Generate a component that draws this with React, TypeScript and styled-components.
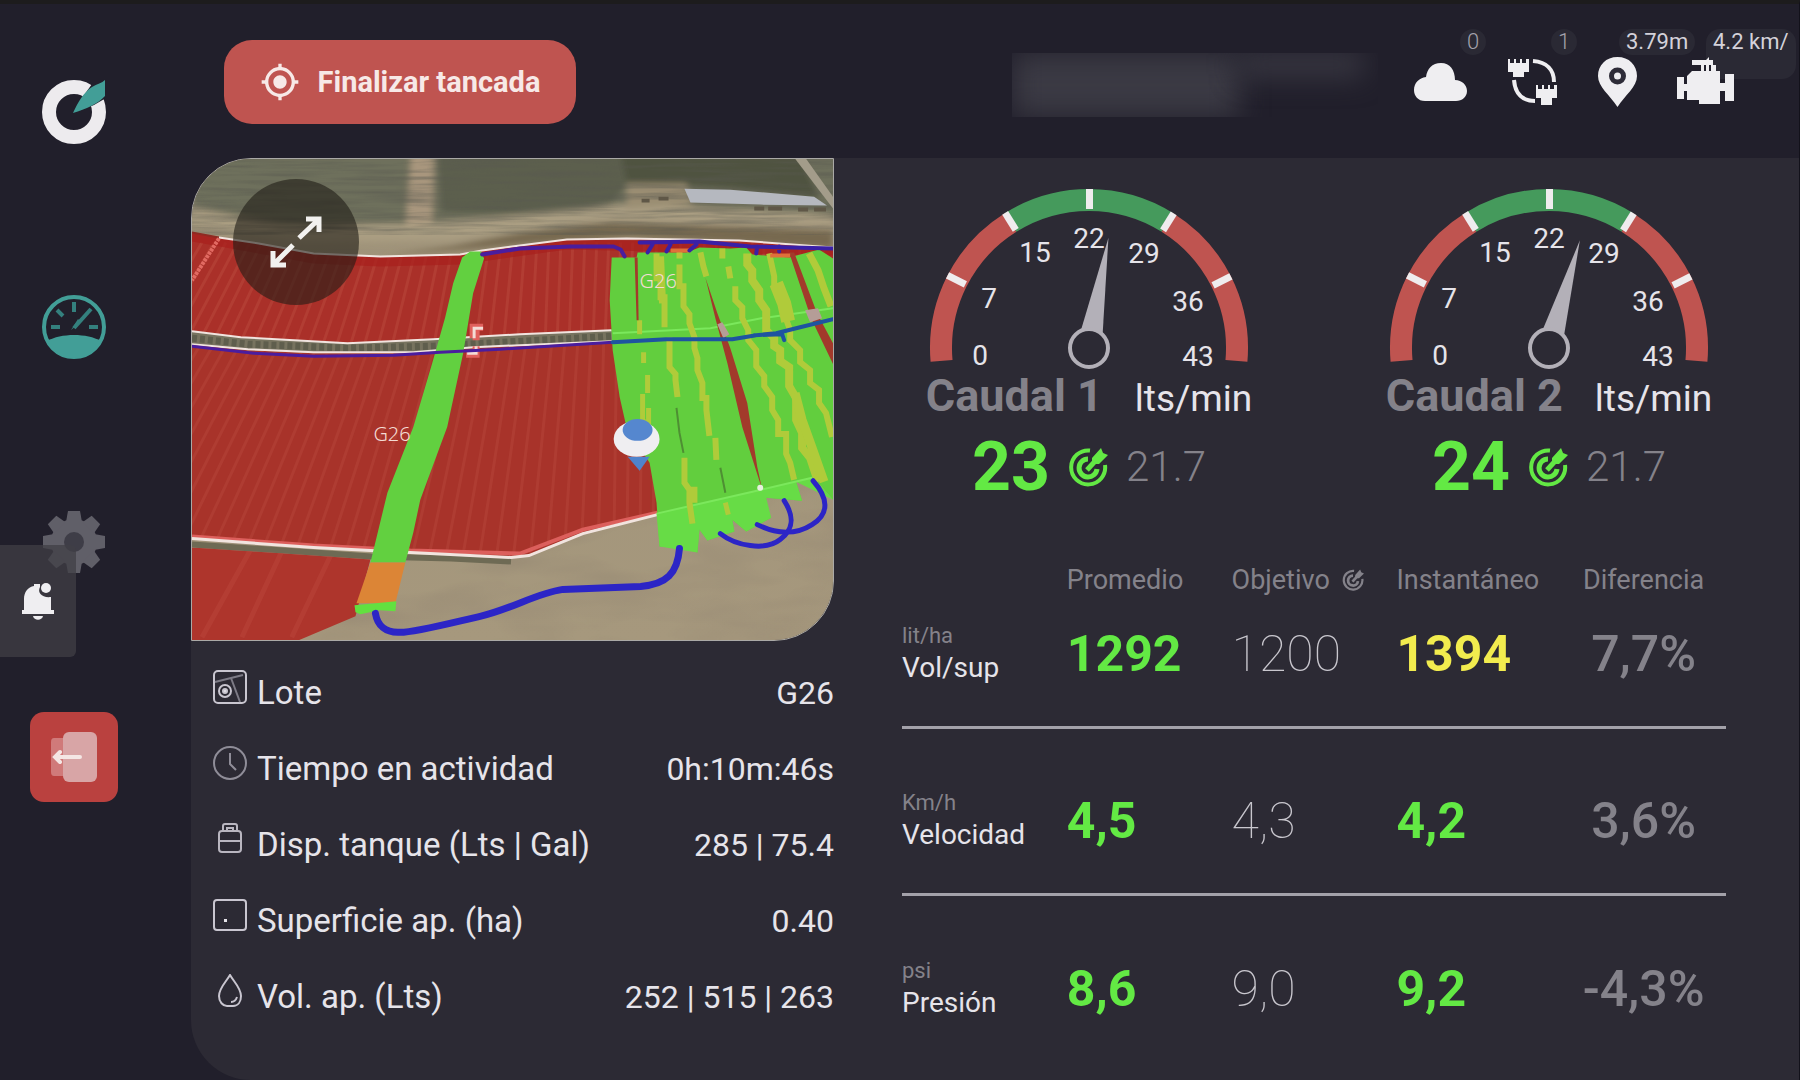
import React from "react";
import styled, { createGlobalStyle } from "styled-components";
import { MdMyLocation } from "react-icons/md";

const colors = {
    background: "#211f2b",
    panel: "#2c2a34",
    text: "#e6e4ea",
    muted: "#84828a",
    green: "#63e944",
    yellow: "#f2ec4e",
    red: "#bf5450",
    teal: "#429e97",
};

interface GaugeData {
    name: string;
    value: string;
    target: string;
    needle: number;
}

interface Metric {
    unit: string;
    name: string;
    average: string;
    target: string;
    instant: string;
    instantColor: string;
    difference: string;
}

interface Detail {
    icon: React.ReactNode;
    label: string;
    value: string;
}

const gauges: GaugeData[] = [
    { name: "Caudal 1", value: "23", target: "21.7", needle: 10 },
    { name: "Caudal 2", value: "24", target: "21.7", needle: 16 },
];

const metrics: Metric[] = [
    {
        unit: "lit/ha",
        name: "Vol/sup",
        average: "1292",
        target: "1200",
        instant: "1394",
        instantColor: colors.yellow,
        difference: "7,7%",
    },
    {
        unit: "Km/h",
        name: "Velocidad",
        average: "4,5",
        target: "4,3",
        instant: "4,2",
        instantColor: colors.green,
        difference: "3,6%",
    },
    {
        unit: "psi",
        name: "Presión",
        average: "8,6",
        target: "9,0",
        instant: "9,2",
        instantColor: colors.green,
        difference: "-4,3%",
    },
];

const dialLabels = [
    { text: "0", x: 51, y: 177 },
    { text: "7", x: 60, y: 120 },
    { text: "15", x: 106, y: 74 },
    { text: "22", x: 160, y: 60 },
    { text: "29", x: 215, y: 75 },
    { text: "36", x: 259, y: 123 },
    { text: "43", x: 269, y: 178 },
];

const polar = (radius: number, degrees: number) => {
    const rad = (degrees * Math.PI) / 180;
    return `${160 + radius * Math.sin(rad)} ${160 - radius * Math.cos(rad)}`;
};

const arc = (from: number, to: number) =>
    `M${polar(148, from)} A148 148 0 0 1 ${polar(148, to)}`;

const Dial: React.FC<{ needle: number }> = ({ needle }) => (
    <svg width="320" height="190" viewBox="0 0 320 190">
        <g fill="none" strokeWidth="22">
            <path d={arc(-95, -32)} stroke={colors.red} />
            <path d={arc(-32, 32)} stroke="#459a5c" />
            <path d={arc(32, 95)} stroke={colors.red} />
        </g>
        {[-63, -32, 0, 32, 63].map(angle => (
            <rect
                key={angle}
                x="157"
                y="1"
                width="7"
                height="20"
                fill="#efecee"
                transform={`rotate(${angle} 160 160)`}
            />
        ))}
        {dialLabels.map(label => (
            <DialText key={label.text} x={label.x} y={label.y}>
                {label.text}
            </DialText>
        ))}
        <g transform={`rotate(${needle} 160 160)`} fill="#b3b0b8">
            <path d="M160 48 L171 144 L149 144 Z" />
        </g>
        <circle cx="160" cy="160" r="19" fill={colors.panel} stroke="#b3b0b8" strokeWidth="4" />
    </svg>
);

const TargetIcon: React.FC<{ size: number }> = ({ size }) => (
    <svg width={size} height={size} viewBox="0 0 40 40" fill="none" stroke="currentColor">
        <path d="M22 3.5 A17 17 0 1 0 37 18" strokeWidth="4" />
        <path d="M20 12 A9 9 0 1 0 29 22" strokeWidth="5" />
        <path d="M19 23 L30 11" strokeWidth="5" />
        <path d="M24 11 L33 1 L35 6 L40 8 L31 17 L24 17 Z" fill="currentColor" stroke="none" />
    </svg>
);

const Logo = () => (
    <svg width="64" height="64" viewBox="0 0 64 64">
        <circle cx="32" cy="32" r="25" fill="none" stroke="#edebee" strokeWidth="14" />
        <path d="M30 34 L40 18 L50 4 L56 0 L64 0 L64 18 L52 25 Z" fill={colors.background} />
        <path d="M31 33 C36 22 42 12 50 7 C55 4 60 3 63 0 L63 16 C56 24 44 29 31 33 Z" fill={colors.teal} />
    </svg>
);

const SpeedIcon = () => (
    <svg width="66" height="66" viewBox="0 0 66 66" fill="none">
        <circle cx="33" cy="33" r="30" stroke={colors.teal} strokeWidth="4" />
        <path d="M6 47 C20 39 46 39 60 47 A30 30 0 0 1 6 47 Z" fill={colors.teal} />
        <g stroke="#34807e" strokeWidth="4">
            <path d="M10 33 H19 M48 33 H57 M33 8 V18 M16 16 L22 22" />
            <path d="M33 34 L50 15" />
        </g>
        <path d="M30 36 L37 25 L40 28 Z" fill="#34807e" />
    </svg>
);

const GearIcon = () => (
    <svg width="62" height="62" viewBox="-31 -31 62 62" fill="#605f68">
        <circle r="23" />
        {[0, 45, 90, 135, 180, 225, 270, 315].map(angle => (
            <path key={angle} d="M-8 -20 L-6 -31 H6 L8 -20 Z" transform={`rotate(${angle})`} />
        ))}
        <circle r="10" fill="#3e3d47" />
    </svg>
);

const BellIcon = () => (
    <svg width="34" height="38" viewBox="0 0 34 38" fill="#efeef1">
        <path d="M3 28 V17 C3 10 7 5 13 4 V2 H19 V5 C16 11 21 16 30 15 V28 H33 V32 H1 V28 Z" />
        <circle cx="25" cy="6" r="5" />
        <path d="M12 34 H22 C21 39 13 39 12 34 Z" />
    </svg>
);

const ExitIcon = () => (
    <svg width="48" height="52" viewBox="0 0 48 52" fill="none">
        <path d="M14 7 H4 Q1 7 1 11 V41 Q1 45 4 45 H14 Z" fill="#d07a7a" />
        <rect x="13" y="1" width="34" height="50" rx="6" fill="#d8a5a6" />
        <path d="M30 26 H6 M10 21 L5 26 L10 31" stroke="#f4e6e4" strokeWidth="4" strokeLinecap="round" />
    </svg>
);

const CloudIcon = () => (
    <svg width="53" height="38" viewBox="0 0 53 38" fill="#efeef1">
        <path d="M11 38 C4 38 0 33 0 27 C0 20 5 15 12 14 C13 6 18 0 27 0 C36 0 41 7 41 17 C48 17 53 22 53 28 C53 34 48 38 42 38 Z" />
    </svg>
);

const LinkIcon = () => (
    <svg width="51" height="48" viewBox="0 0 51 48" fill="#efeef1">
        <path d="M1 1 H3 V5 H7 V1 H9 V5 H13 V1 H15 V5 H19 V1 H22 V14 H17 V19 H6 V14 H1 Z" />
        <path d="M29 27 H31 V31 H35 V27 H37 V31 H41 V27 H43 V31 H47 V27 H50 V40 H45 V47 H34 V40 H29 Z" />
        <path d="M26 3 C40 4 47 12 47 24 M7 22 C8 36 16 43 28 43" fill="none" stroke="#efeef1" strokeWidth="4" />
    </svg>
);

const PinIcon = () => (
    <svg width="39" height="50" viewBox="0 0 39 50">
        <path d="M19.500 0 C8 0 0 8 0 19 C0 30 12 38 19.500 50 C27 38 39 30 39 19 C39 8 31 0 19.500 0 Z" fill="#efeef1" />
        <circle cx="19.500" cy="19" r="6" fill="#efeef1" stroke="#2e2c38" strokeWidth="5" />
    </svg>
);

const EngineIcon = () => (
    <svg width="57" height="46" viewBox="0 0 57 46" fill="#efeef1">
        <path d="M15 1 H29 L32 -2 V1 H36 V6 H39 V12 H43 V24 H48 V15 H57 V42 H48 V32 H43 V45 H22 V41 H10 V32 H7 V40 H0 V18 H7 V25 H10 V17 L15 12 H24 V6 H15 Z" />
        <path d="M28 6 V12 M33 6 V12" stroke="#211f2b" strokeWidth="2" />
    </svg>
);

const ExpandIcon = () => (
    <svg width="52" height="52" viewBox="0 0 52 52" fill="none" stroke="#f2f1ef" strokeWidth="5">
        <path d="M29 22 L48 4 M36 3 H49 V16" />
        <path d="M23 29 L4 48 M3 35 V49 H16" />
    </svg>
);

const LotIcon = () => (
    <svg width="34" height="34" viewBox="0 0 34 34" fill="none" stroke="#c9c6d0" strokeWidth="2">
        <rect x="1" y="1" width="32" height="32" rx="4" />
        <path d="M2 12 L30 5 M18 8 L27 32" stroke="#7d7b86" />
        <circle cx="12" cy="21" r="6" />
        <circle cx="12" cy="21" r="2" fill="#e6e4ea" />
    </svg>
);

const ClockIcon = () => (
    <svg width="34" height="34" viewBox="0 0 34 34" fill="none" stroke="#8f8d98" strokeWidth="2">
        <circle cx="17" cy="17" r="16" />
        <path d="M17 7 V18 L23 24" />
    </svg>
);

const TankIcon = () => (
    <svg width="34" height="34" viewBox="0 0 34 34" fill="none" stroke="#b9b6c0" strokeWidth="2">
        <path d="M10 9 V4 Q10 2 12 2 H22 Q24 2 24 4 V9 M14 9 V6 H20 V9" />
        <rect x="6" y="9" width="22" height="21" rx="3" />
        <path d="M6 19 H28" />
    </svg>
);

const AreaIcon = () => (
    <svg width="34" height="34" viewBox="0 0 34 34" fill="none" stroke="#c9c6d0" strokeWidth="2">
        <rect x="1" y="2" width="32" height="30" rx="3" />
        <rect x="11" y="21" width="3" height="3" fill="#e6e4ea" stroke="none" />
    </svg>
);

const DropIcon = () => (
    <svg width="34" height="34" viewBox="0 0 34 34" fill="none" stroke="#c9c6d0" strokeWidth="2">
        <path d="M17 1 C13 8 6 14 6 22 C6 28 10 32 14 32 H20 C25 32 28 28 28 22 C28 14 21 8 17 1 Z" />
        <path d="M18 28 C21 28 23 26 24 23" />
    </svg>
);

const details: Detail[] = [
    { icon: <LotIcon />, label: "Lote", value: "G26" },
    { icon: <ClockIcon />, label: "Tiempo en actividad", value: "0h:10m:46s" },
    { icon: <TankIcon />, label: "Disp. tanque (Lts | Gal)", value: "285 | 75.4" },
    { icon: <AreaIcon />, label: "Superficie ap. (ha)", value: "0.40" },
    { icon: <DropIcon />, label: "Vol. ap. (Lts)", value: "252 | 515 | 263" },
];

const yellowTracks = [
    { d: "M466 95 V120 H470 V139 H474 V169 M479 179 V209 L485 216 V222 L487 239", width: 6 },
    { d: "M470 98 L472 145", width: 7 },
    { d: "M489 92 V100 M489 106 V128 H493 V148 L499 156 V165 L504 179 V190 L507 200 V212 L512 225 V240 H516 V252 L519 278 M525 280 L526 302", width: 6 },
    { d: "M510 94 L513 108 L516 118 M532 90 V100 M538 108 L540 120 M545 128 V142 L552 149 V160 L558 172 V182 L566 192 V208 L574 218 V228 L582 239 V252 L588 262 V276 H596 V296 L600 305 L604 322", width: 6 },
    { d: "M557 95 V106 L562 112 V122 L569 132 V142 L576 152 V172 L584 180 V188 L590 192 V203 L599 209 V228 L606 240 V262 L612 275 V290 L620 300 L628 324", width: 8 },
    { d: "M605 235 L612 262 L622 290 L634 324", width: 9 },
    { d: "M579 95 L584 118 V128 L592 139 V150 L600 172 V182 L610 192 V204 L620 212 V225 L629 232 V245 L636 255 L642 279", width: 6 },
    { d: "M586 125 L594 145 L598 163", width: 14 },
    { d: "M619 95 L628 112 L634 130 L641 148", width: 7 },
    { d: "M449 162 V176 M453 194 V205 M457 217 V235 M452 236 V262 L460 270 M458 250 V268", width: 5 },
    { d: "M494 300 V325 L499 332 V345 L502 366 M499 332 H504 V345", width: 6 },
    { d: "M535 345 L538 357", width: 5 },
];

const FieldMap = () => (
    <MapDrawing viewBox="0 0 643 483" preserveAspectRatio="xMidYMid slice" role="img" aria-label="Mapa del lote">
        <defs>
            <filter id="streaks" x="0" y="0" width="100%" height="100%">
                <feTurbulence type="fractalNoise" baseFrequency="0.012 0.22" numOctaves="3" seed="4" />
                <feColorMatrix values="0 0 0 0 0.1  0 0 0 0 0.1  0 0 0 0 0.08  1.6 0 0 0 -0.6" />
            </filter>
            <filter id="soil" x="0" y="0" width="100%" height="100%">
                <feTurbulence type="fractalNoise" baseFrequency="0.008 0.03" numOctaves="3" seed="9" />
                <feColorMatrix values="0 0 0 0 0.25  0 0 0 0 0.2  0 0 0 0 0.15  1.2 0 0 0 -0.5" />
            </filter>
            <filter id="soften">
                <feGaussianBlur stdDeviation="3" />
            </filter>
            <linearGradient id="land" x1="0" y1="0" x2="0" y2="1">
                <stop offset="0" stopColor="#9e9279" />
                <stop offset="1" stopColor="#a6987d" />
            </linearGradient>
            <clipPath id="upperField">
                <path d="M0 74 L27 79 L67 85 L122 95 L189 98 L269 96 L291 92 L329 88 L376 81 L436 80 L549 82 L643 89 V150 L421 172 L329 176 L242 181 L156 185 L49 179 L0 173 Z" />
            </clipPath>
            <clipPath id="lowerField">
                <path d="M0 186 L56 192 L122 195 L222 195 L282 190 L422 183 L643 160 V310 L467 357 L392 375 L336 398 L309 399 L219 395 L122 390 L0 380 Z" />
            </clipPath>
            <clipPath id="cornerField">
                <path d="M0 390 L122 398 L179 402 L164 459 L107 483 H0 Z" />
            </clipPath>
        </defs>

        {/* surroundings */}
        <rect width="643" height="483" fill="url(#land)" />
        <g filter="url(#soften)">
            <path d="M0 -6 H650 V60 L500 48 L420 46 L330 60 L240 66 L90 66 L0 48 Z" fill="#6e6f5c" />
            <path d="M330 -6 H560 L480 28 L436 26 L420 46 L340 58 L250 54 L246 -6 Z" fill="#5c5f4d" />
            <path d="M430 -6 H610 L630 40 L540 30 L436 24 Z" fill="#4f5341" />
            <path d="M220 -6 H243 L241 66 L214 70 Z" fill="#a8967d" />
            <path d="M0 52 L80 66 L220 66 L330 56 L440 46 L643 56 V66 L400 62 L260 82 L110 84 L0 66 Z" fill="#aa9e82" />
            <path d="M260 88 L330 74 L420 64 L643 72 V90 L440 78 L330 86 L190 98 Z" fill="#77694f" />
            <path d="M436 25 H496 L502 46 L436 50 Z" fill="#9a8d72" />
        </g>
        <rect width="643" height="76" filter="url(#streaks)" opacity="0.7" />
        <path d="M605 0 H616 L643 38 V50 Z" fill="#a39c8a" />
        <path d="M494 30 L540 31 L624 38 L637 47 L570 46 L500 44 Z" fill="#b5b8bf" />
        <path d="M451 42 h8 M468 40 h10 M564 50 h10 M578 50 h14 M608 51 h10 M624 51 h12" stroke="#5f5747" strokeWidth="4" />
        <rect y="310" width="643" height="173" filter="url(#soil)" opacity="0.6" />

        {/* lane between the lots */}
        <path d="M0 173 L49 179 L156 185 L242 181 L329 176 L421 172 V184 L329 188 L222 194 L122 194 L56 191 L0 186 Z" fill="#77735f" />
        <path d="M0 180 L56 186 L156 190 L242 188 L421 178" fill="none" stroke="#5f5e4d" strokeWidth="7" strokeDasharray="5 3" />
        <path d="M0 387 L122 395 L180 399 L260 401 L320 404" fill="none" stroke="#6e6a54" strokeWidth="6" />

        {/* lots */}
        <g clipPath="url(#upperField)">
            <rect width="643" height="200" fill="#aa3029" />
            {Array.from({ length: 64 }, (_, i) => (
                <path
                    key={i}
                    d={`M${i * 12 + 10} 84 L${i * 12 + 10 - Math.max(4, 62 - i * 2)} 190`}
                    stroke="#b8463b"
                    strokeWidth="3"
                    opacity="0.6"
                />
            ))}
            <path d="M0 78 L67 90 L122 100 L189 103 L269 101 L376 86 L643 92" fill="none" stroke="#a81f1d" strokeWidth="10" opacity="0.7" />
        </g>
        <g clipPath="url(#lowerField)">
            <rect y="150" width="643" height="260" fill="#a8332a" />
            {Array.from({ length: 70 }, (_, i) => (
                <path
                    key={i}
                    d={`M${i * 13 + 10} 184 L${i * 13 + 10 - Math.max(3, 130 - i * 4)} 402`}
                    stroke="#b5473b"
                    strokeWidth="3"
                    opacity="0.5"
                />
            ))}
        </g>
        <g clipPath="url(#cornerField)">
            <rect y="380" width="200" height="110" fill="#ae352c" />
            <path d="M60 390 L10 480 M90 394 L50 480 M140 396 L100 480" stroke="#b8443a" strokeWidth="5" opacity="0.6" />
        </g>
        <g fill="none" stroke="#f1e4df" strokeWidth="2">
            <path d="M0 74 L27 79" stroke="#8f2a22" />
            <path d="M27 79 L67 85 L122 95 L189 98 L269 96 L291 92 L329 87 L376 81 L436 80 L549 82 L643 89" />
            <path d="M0 173 L49 179 L156 185 L242 181 L329 176 L421 172" />
            <path d="M0 186 L56 191 L122 194 L222 194 L282 189 L329 187 L422 183" />
            <path d="M0 379 L122 388 L219 393 L329 396 L392 372 L467 355" stroke="#dc5f5c" strokeWidth="4" />
            <path d="M0 381 L122 390 L179 393 L219 395 L320 400 L338 398 L392 376 L467 357" strokeWidth="3" />
        </g>
        <path d="M27 80 L0 122" stroke="#e26a62" strokeWidth="4" strokeDasharray="3 1" />
        <path d="M282 180 V169 H292 M285 170 V182 M275 196 H285 V188" fill="none" stroke="#e0605c" strokeWidth="7" />
        <path d="M283 180 V170 H292 M276 195 H285 V188" fill="none" stroke="#f3dcd6" strokeWidth="3" />

        {/* previous passes */}
        <path
            d="M421 99 L446 99 L447 94 L496 94 L509 89 L540 90 L556 89 L562 96 L599 99 L629 91 L643 100 V342 L624 320 L606 324 L612 343 L576 340 L574 345 L581 360 L556 374 L542 362 L544 374 L517 383 L509 372 L507 395 L489 390 L469 389 L466 345 L459 305 L436 270 L429 239 L422 192 L419 142 Z"
            fill="#62ce3e"
        />
        <path d="M466 356 L571 332 L624 320 L643 342 L606 324 L612 343 L576 340 L581 360 L556 374 L542 362 L544 374 L517 383 L509 372 L507 395 L469 389 Z" fill="#67dc46" />
        <path d="M422 175 L520 170 L571 160 L643 150 M466 356 L571 332 L622 320" fill="none" stroke="#7be85c" strokeWidth="2" />
        {yellowTracks.map(track => (
            <path key={track.d} d={track.d} fill="none" stroke="#b0cb3a" strokeWidth={track.width} />
        ))}
        <g fill="#a23a2b">
            <path d="M444 99 H447 L448 162 H446 Z" />
            <path d="M515 119 L527 155 L540 190 L557 245 L567 309 L572 332 L552 269 L537 205 L525 160 Z" />
            <path d="M599 94 H604 L627 155 L643 185 V206 L621 160 Z" />
        </g>
        <path d="M486 250 L489 275 L493 295 M530 310 L535 335" fill="none" stroke="#4e8f33" strokeWidth="2" />
        <path d="M527 166 L533 180 L539 176 L532 164 Z M615 152 L628 150 L632 160 L620 164 Z" fill="#b59d97" />
        <circle cx="570" cy="330" r="3" fill="#e6f1de" />
        <path d="M480 92 H500 M580 97 H600" stroke="#e0703a" strokeWidth="4" />

        {/* current pass */}
        <path
            d="M279 93 L271 99 L262 125 L254 159 L241 205 L222 269 L196 335 L179 405 L214 405 L222 375 L229 342 L256 269 L272 195 L282 135 L293 100 L290 93 Z"
            fill="#62d040"
        />
        <path d="M179 405 H214 L204 446 H165 Z" fill="#dc8536" />
        <path d="M163 448 L205 444 L204 454 L188 453 L169 457 L164 455 Z" fill="#62e040" />

        {/* tractor trail */}
        <g fill="none" stroke="#2c25c6" strokeLinecap="round" strokeLinejoin="round">
            <path d="M0 188 L62 195 L122 198 L202 197 L249 194 L309 191 L422 184" stroke="#4a1d9e" strokeWidth="3" />
            <path d="M422 184 L476 181 L542 181 L566 177 L586 175 L610 169 L643 161 M564 177 L592 176 L594 182" stroke="#1e54a0" strokeWidth="4" />
            <path d="M291 96 L329 90 L380 88 L423 88 L430 91 L434 98" stroke="#4a1d9e" strokeWidth="4" />
            <path d="M449 84 L509 83 L560 88 L643 90 M457 94 L462 86 M476 93 L480 86 M499 92 L506 86 M566 95 L567 88 M589 93 V88" stroke="#3a20a6" strokeWidth="4" />
            <path d="M184 456 C186 468 194 476 209 475 C225 475 270 463 289 459 C320 452 345 436 372 432 L450 429 C476 427 487 416 489 391" strokeWidth="7" />
            <path d="M530 376 C545 388 575 394 590 382 C603 372 605 360 594 343" strokeWidth="5" />
            <path d="M567 367 C585 376 605 378 622 367 C640 356 638 340 623 323" strokeWidth="5" />
        </g>

        <MapLabel x="182" y="283">G26</MapLabel>
        <MapLabel x="449" y="130">G26</MapLabel>

        <path d="M437 299 H459 L449 313 Z" fill="#4f83cc" />
        <ellipse cx="446" cy="281" rx="23" ry="18" fill="#efeef1" />
        <ellipse cx="447" cy="272" rx="15" ry="11" fill="#5587cf" />
    </MapDrawing>
);

const App: React.FC = () => (
    <Shell>
        <GlobalStyle />
        <Sidebar>
            <NavLink href="#inicio" aria-label="Inicio">
                <Logo />
            </NavLink>
            <NavLink href="#tablero" aria-label="Tablero">
                <SpeedIcon />
            </NavLink>
            <NavLink href="#ajustes" aria-label="Ajustes">
                <GearIcon />
            </NavLink>
            <ExitButton type="button" aria-label="Salir">
                <ExitIcon />
            </ExitButton>
            <AlertsTab type="button" aria-label="Notificaciones">
                <BellIcon />
            </AlertsTab>
        </Sidebar>

        <Main>
            <Header>
                <FinishButton type="button">
                    <MdMyLocation size={40} />
                    Finalizar tancada
                </FinishButton>
                <HiddenName>
                    <Smudge $width={62} $height={100} />
                    <Smudge $width={34} $height={36} />
                </HiddenName>
                <StatusBar>
                    <StatusItem>
                        <Badge $overlap={7} $dim>0</Badge>
                        <CloudIcon />
                    </StatusItem>
                    <StatusItem>
                        <Badge $overlap={7} $dim>1</Badge>
                        <LinkIcon />
                    </StatusItem>
                    <StatusItem>
                        <Badge $overlap={18}>3.79m</Badge>
                        <PinIcon />
                    </StatusItem>
                    <StatusItem>
                        <Badge $overlap={28} $tall>4.2 km/</Badge>
                        <EngineIcon />
                    </StatusItem>
                </StatusBar>
            </Header>

            <Panel>
                <div>
                    <MapCard>
                        <FieldMap />
                        <ExpandButton type="button" aria-label="Ampliar mapa">
                            <ExpandIcon />
                        </ExpandButton>
                    </MapCard>
                    <DetailList>
                        {details.map(detail => (
                            <DetailRow key={detail.label}>
                                <DetailIcon>{detail.icon}</DetailIcon>
                                <dt>{detail.label}</dt>
                                <DetailValue>{detail.value}</DetailValue>
                            </DetailRow>
                        ))}
                    </DetailList>
                </div>

                <Readings>
                    <GaugeGrid>
                        {gauges.map(gauge => (
                            <Gauge key={gauge.name}>
                                <Dial needle={gauge.needle} />
                                <GaugeTitle>
                                    <GaugeName>{gauge.name}</GaugeName>
                                    <GaugeUnit>lts/min</GaugeUnit>
                                </GaugeTitle>
                                <GaugeValues>
                                    <GaugeValue>{gauge.value}</GaugeValue>
                                    <TargetIcon size={40} />
                                    <GaugeTarget>{gauge.target}</GaugeTarget>
                                </GaugeValues>
                            </Gauge>
                        ))}
                    </GaugeGrid>

                    <MetricTable>
                        <thead>
                            <tr>
                                <HeadCell />
                                <HeadCell scope="col">Promedio</HeadCell>
                                <HeadCell scope="col">
                                    <HeadIconLabel>
                                        Objetivo
                                        <TargetIcon size={22} />
                                    </HeadIconLabel>
                                </HeadCell>
                                <HeadCell scope="col">Instantáneo</HeadCell>
                                <HeadCell scope="col" $center>
                                    Diferencia
                                </HeadCell>
                            </tr>
                        </thead>
                        <tbody>
                            {metrics.map(metric => (
                                <MetricRow key={metric.name}>
                                    <MetricName scope="row">
                                        <MetricUnit>{metric.unit}</MetricUnit>
                                        {metric.name}
                                    </MetricName>
                                    <MetricValue $color={colors.green}>{metric.average}</MetricValue>
                                    <MetricValue $color="#c9c7ce" $weight={100}>
                                        {metric.target}
                                    </MetricValue>
                                    <MetricValue $color={metric.instantColor}>{metric.instant}</MetricValue>
                                    <MetricValue $color={colors.muted} $weight={500} $center>
                                        {metric.difference}
                                    </MetricValue>
                                </MetricRow>
                            ))}
                        </tbody>
                    </MetricTable>
                </Readings>
            </Panel>
        </Main>
    </Shell>
);

export default App;

const GlobalStyle = createGlobalStyle`
    * {
        box-sizing: border-box;
    }

    body {
        margin: 0;
        background: #ffffff;
        color: ${colors.text};
        font-family: Roboto, "Liberation Sans", sans-serif;
    }

    button {
        border: 0;
        padding: 0;
        font-family: inherit;
        cursor: pointer;
    }

    svg {
        display: block;
        flex-shrink: 0;
    }
`;

const Shell = styled.div`
    position: relative;
    display: grid;
    grid-template-columns: 191px minmax(0, 1fr);
    min-height: calc(100vh - 7px);
    overflow: hidden;
    background: ${colors.background};
    border-top: 4px solid #1d1c1d;
    border-right: 1px solid #12111a;
`;

const Sidebar = styled.nav`
    display: flex;
    flex-direction: column;
    gap: 125px;
    padding: 63px 0 0 30px;
`;

const NavLink = styled.a`
    display: flex;
    align-items: center;
    justify-content: center;
    width: 88px;
    height: 90px;
`;

const ExitButton = styled.button`
    display: flex;
    align-items: center;
    justify-content: center;
    width: 88px;
    height: 90px;
    border-radius: 14px;
    background: #ba413f;
`;

const AlertsTab = styled.button`
    position: absolute;
    top: 541px;
    left: 0;
    display: flex;
    align-items: center;
    justify-content: center;
    width: 76px;
    height: 112px;
    border-radius: 0 6px 6px 0;
    background: rgba(64, 63, 70, 0.75);
`;

const Main = styled.main`
    display: flex;
    flex-direction: column;
`;

const Header = styled.header`
    display: flex;
    align-items: center;
    height: 154px;
    padding: 2px 65px 0 33px;
`;

const FinishButton = styled.button`
    display: flex;
    align-items: center;
    justify-content: center;
    gap: 18px;
    width: 352px;
    height: 84px;
    border-radius: 28px;
    background: ${colors.red};
    color: #f7e9e7;
    font-size: 29px;
    font-weight: 700;
    line-height: 32px;
`;

const HiddenName = styled.div`
    display: flex;
    width: 366px;
    height: 64px;
    margin: 6px 36px 0 auto;
    overflow: hidden;
`;

const Smudge = styled.div<{ $width: number; $height: number }>`
    width: ${props => props.$width}%;
    height: ${props => props.$height}%;
    background: #3b3a44;
    filter: blur(14px);
`;

const StatusBar = styled.div`
    display: flex;
    align-items: center;
    gap: 40px;
`;

const StatusItem = styled.div`
    position: relative;
    display: flex;
    align-items: center;
    height: 50px;

    svg {
        position: relative;
        overflow: visible;
    }
`;

const Badge = styled.span<{ $overlap: number; $dim?: boolean; $tall?: boolean }>`
    position: absolute;
    top: -28px;
    left: calc(100% - ${props => props.$overlap}px);
    height: ${props => (props.$tall ? 50 : 26)}px;
    padding: 0 7px;
    border-radius: 14px;
    background: #2a2934;
    color: ${props => (props.$dim ? "#a3a1ab" : "#d4d2da")};
    font-size: 22px;
    font-weight: ${props => (props.$dim ? 300 : 400)};
    line-height: 26px;
    white-space: nowrap;
`;

const Panel = styled.div`
    flex: 1;
    display: grid;
    grid-template-columns: minmax(0, 643fr) minmax(0, 965fr);
    border-radius: 60px 0 0 60px;
    background: ${colors.panel};
`;

const MapCard = styled.div`
    position: relative;
    aspect-ratio: 643 / 483;
    overflow: hidden;
    border: 1px solid #aaa9a6;
    border-radius: 60px 0 60px 0;
`;

const MapDrawing = styled.svg`
    width: 100%;
    height: 100%;
`;

const MapLabel = styled.text`
    fill: #f4dcd4;
    font-family: "Noto Sans", sans-serif;
    font-size: 20px;
    font-weight: 300;
`;

const ExpandButton = styled.button`
    position: absolute;
    top: 20px;
    left: 41px;
    display: flex;
    align-items: center;
    justify-content: center;
    width: 126px;
    height: 126px;
    border-radius: 50%;
    background: rgba(32, 28, 22, 0.6);
`;

const DetailList = styled.dl`
    margin: 14px 0 0;
    padding-left: 22px;
`;

const DetailRow = styled.div`
    display: flex;
    align-items: center;
    height: 76px;
    font-size: 33px;
    line-height: 36px;
    white-space: nowrap;
`;

const DetailIcon = styled.span`
    margin: 0 10px 12px 0;
`;

const DetailValue = styled.dd`
    margin: 0 0 0 auto;
    font-size: 32px;
`;

const Readings = styled.section`
    padding: 30px 20px 0 25px;
`;

const GaugeGrid = styled.div`
    display: grid;
    grid-template-columns: 1fr 1fr;
`;

const Gauge = styled.div`
    display: flex;
    flex-direction: column;
    align-items: center;
    color: ${colors.green};
`;

const DialText = styled.text`
    fill: ${colors.text};
    font-size: 28px;
    text-anchor: middle;
`;

const GaugeTitle = styled.div`
    display: flex;
    align-items: baseline;
    gap: 32px;
    line-height: 36px;
    white-space: nowrap;
`;

const GaugeName = styled.h2`
    margin: 0;
    color: ${colors.muted};
    font-size: 45px;
    font-weight: 700;
`;

const GaugeUnit = styled.span`
    color: ${colors.text};
    font-size: 37px;
`;

const GaugeValues = styled.div`
    display: flex;
    align-items: center;
    gap: 18px;
    margin-top: 14px;
`;

const GaugeValue = styled.strong`
    font-size: 68px;
    line-height: 72px;
`;

const GaugeTarget = styled.span`
    color: ${colors.muted};
    font-size: 42px;
    font-weight: 300;
    line-height: 48px;
`;

const MetricTable = styled.table`
    width: calc(100% - 96px);
    margin: 61px 0 0 43px;
    table-layout: fixed;
    border-collapse: collapse;
`;

const HeadCell = styled.th<{ $center?: boolean }>`
    padding: 0;
    color: ${colors.muted};
    font-size: 27px;
    font-weight: 400;
    line-height: 32px;
    text-align: ${props => (props.$center ? "center" : "left")};
    white-space: nowrap;
`;

const HeadIconLabel = styled.span`
    display: flex;
    align-items: center;
    gap: 12px;
`;

const MetricRow = styled.tr`
    height: 167px;
    border-bottom: 3px solid #a3a1a9;

    &:first-child {
        height: 131px;
    }

    &:last-child {
        border-bottom: 0;
    }
`;

const MetricName = styled.th`
    padding: 0 0 42px;
    color: ${colors.text};
    font-size: 28px;
    font-weight: 400;
    line-height: 32px;
    text-align: left;
    vertical-align: bottom;
`;

const MetricUnit = styled.span`
    display: block;
    color: ${colors.muted};
    font-size: 22px;
`;

const MetricValue = styled.td<{ $color: string; $weight?: number; $center?: boolean }>`
    padding: 0 0 42px;
    color: ${props => props.$color};
    font-size: 50px;
    font-weight: ${props => props.$weight ?? 700};
    line-height: 60px;
    text-align: ${props => (props.$center ? "center" : "left")};
    vertical-align: bottom;
    white-space: nowrap;
`;
